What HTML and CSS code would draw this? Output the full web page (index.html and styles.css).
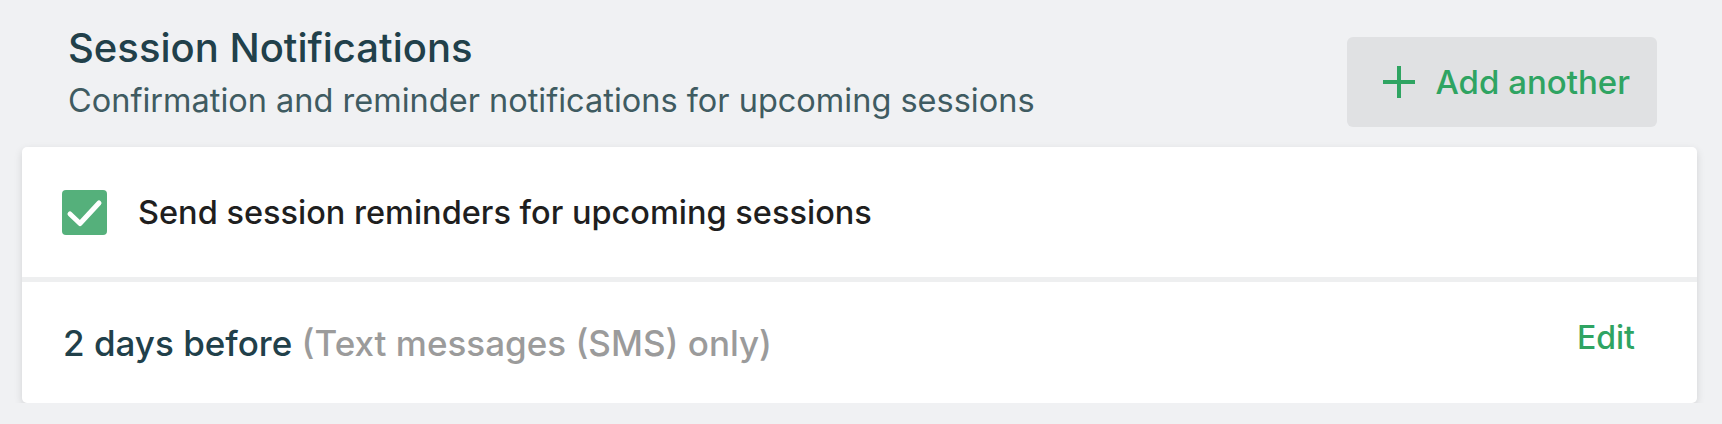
FILE: index.html
```html
<!DOCTYPE html>
<html lang="en">
<head>
    <meta charset="UTF-8">
    <meta name="viewport" content="width=device-width, initial-scale=1.0">
    <title>Session Notifications</title>
    <link rel="stylesheet" href="styles.css">
</head>
<body>
    <section class="notificacoes">
        <div class="cabecalho">
            <div class="titulos">
                <h1>Session Notifications</h1>
                <p>Confirmation and reminder notifications for upcoming sessions</p>
            </div>
            <button class="adicionar" type="button">
                <svg width="34" height="34" viewBox="0 0 34 34" aria-hidden="true">
                    <path d="M17 1v32M1 17h32" stroke="currentColor" stroke-width="4" fill="none"/>
                </svg>
                <span>Add another</span>
            </button>
        </div>
        <div class="cartao">
            <label class="linha linha-check">
                <span class="caixa">
                    <svg width="45" height="45" viewBox="0 0 45 45" aria-hidden="true">
                        <path d="M8 24l10 9.5L37 13" stroke="#fff" stroke-width="5" fill="none" stroke-linecap="round" stroke-linejoin="round"/>
                    </svg>
                </span>
                <span class="rotulo">Send session reminders for upcoming sessions</span>
            </label>
            <div class="linha linha-lembrete">
                <div class="lembrete">2 days before <span class="canal">(Text messages (SMS) only)</span></div>
                <a class="editar" href="#">Edit</a>
            </div>
        </div>
    </section>
</body>
</html>
```

FILE: styles.css
```css
:root {
    --verde: #2fa462;
    --verde-caixa: #55b07b;
    --texto-escuro: #21404a;
    --fundo: #f0f1f3;
}
* {
    box-sizing: border-box;
}
body {
    margin: 0;
    background-color: var(--fundo);
    font-family: Inter, 'Noto Sans', sans-serif;
}
.notificacoes {
    padding: 0 25px 0 22px;
}
.cabecalho {
    display: flex;
    justify-content: space-between;
    align-items: flex-start;
    padding: 24px 40px 0 46px;
}
.titulos h1 {
    margin: 0;
    font-size: 40px;
    line-height: 48px;
    font-weight: 500;
    color: var(--texto-escuro);
}
.titulos p {
    margin: 9px 0 0;
    font-size: 32.5px;
    line-height: 40px;
    color: #3f5b61;
}
.adicionar {
    display: flex;
    align-items: center;
    gap: 19px;
    height: 90px;
    margin-top: 13px;
    padding: 0 27px 0 35px;
    border: none;
    border-radius: 6px;
    background-color: #e0e1e3;
    color: var(--verde);
    font-family: inherit;
    font-size: 33px;
    font-weight: 500;
    cursor: pointer;
}
.adicionar svg {
    display: block;
}
.cartao {
    margin-top: 20px;
    background: white;
    border-radius: 5px;
    box-shadow: 0 3px 8px rgba(0,0,0,0.12);
}
.linha {
    display: flex;
    align-items: center;
}
.linha-check {
    height: 135px;
    padding: 0 40px;
    gap: 31px;
    border-bottom: 5px solid #eeeff0;
}
.caixa {
    width: 45px;
    height: 45px;
    border-radius: 4px;
    background-color: var(--verde-caixa);
    flex-shrink: 0;
}
.caixa svg {
    display: block;
}
.rotulo {
    font-size: 32.5px;
    font-weight: 500;
    color: #1f1f1f;
}
.linha-lembrete {
    justify-content: space-between;
    height: 121px;
    padding: 0 62px 0 41px;
}
.lembrete {
    font-size: 35px;
    font-weight: 500;
    color: var(--texto-escuro);
}
.canal {
    color: #9b9b9b;
}
.editar {
    padding-bottom: 10px;
    font-size: 32px;
    font-weight: 500;
    color: var(--verde);
    text-decoration: none;
}
```
